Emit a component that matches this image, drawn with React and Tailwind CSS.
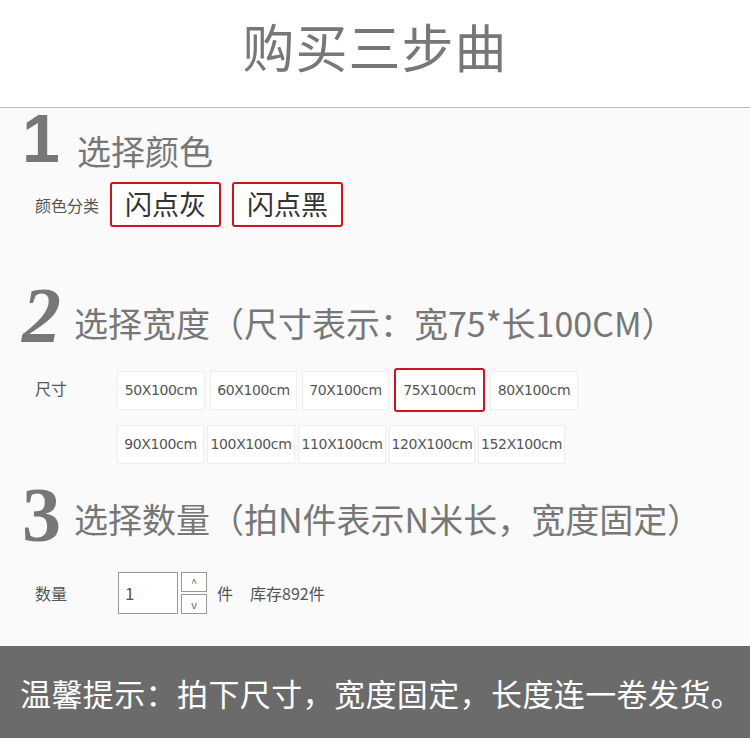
import React from "react";

const cjk = { fontFamily: '"Noto Sans CJK SC", "Noto Sans", sans-serif' };
const serif = { fontFamily: '"Liberation Serif", "DejaVu Serif", serif' };
const sans = { fontFamily: '"Liberation Sans", Arial, sans-serif' };

const sizesTop = [
  { label: "50X100cm", w: "w-[88px]" },
  { label: "60X100cm", w: "w-[87px]" },
  { label: "70X100cm", w: "w-[87px]" },
  { label: "75X100cm", w: "w-[91px]", active: true },
  { label: "80X100cm", w: "w-[88px]" },
];

const sizesBottom = [
  { label: "90X100cm", w: "w-[87px]" },
  { label: "100X100cm", w: "w-[88px]" },
  { label: "110X100cm", w: "w-[88px]" },
  { label: "120X100cm", w: "w-[86px]" },
  { label: "152X100cm", w: "w-[87px]" },
];

function StepHead({ num, numClass, numFont, children }) {
  return (
    <div className="flex items-end h-[62px] pl-[22px]">
      <span className={"text-[#777] leading-none w-[52px] " + numClass} style={numFont}>
        {num}
      </span>
      <span className="text-[34px] leading-none text-[#777] pb-[2px]" style={cjk}>
        {children}
      </span>
    </div>
  );
}

function SizeBox({ label, w, active }) {
  return (
    <div
      className={
        active
          ? w + " h-[44px] flex items-center justify-center border-2 border-[#d0141b] rounded-[3px] bg-white"
          : w + " h-[39px] flex items-center justify-center border border-[#eeeeee] bg-white"
      }
    >
      <span className="text-[14px] text-[#555] tracking-[-0.4px]" style={{ fontFamily: '"DejaVu Sans", sans-serif' }}>
        {label}
      </span>
    </div>
  );
}

export default function App() {
  return (
    <div className="w-[750px] h-[744px] bg-white overflow-hidden" style={cjk}>
      <div className="h-[107px] flex items-center justify-center pb-[16px]">
        <h1 className="text-[52px] leading-none text-[#777] tracking-[1px]">购买三步曲</h1>
      </div>
      <div className="h-px bg-[#b8b8b8]" />

      <div className="bg-[#fafafa] h-[538px]">
        <StepHead num="1" numClass="text-[68px] font-bold mb-[-2px]" numFont={sans}>
          <span className="pl-[3px]">选择颜色</span>
        </StepHead>

        <div className="flex items-center mt-[12px] h-[45px]">
          <span className="pl-[35px] w-[110px] text-[16px] text-[#555]">颜色分类</span>
          <div className="flex gap-[11px]">
            {["闪点灰", "闪点黑"].map((c) => (
              <div
                key={c}
                className="w-[111px] h-[45px] flex items-center justify-center border-2 border-[#d0141b] rounded-[3px] bg-white text-[27px] text-[#333]"
              >
                {c}
              </div>
            ))}
          </div>
        </div>

        <div className="mt-[53px]">
          <StepHead num="2" numClass="text-[78px] font-bold italic mb-[-12px]" numFont={serif}>
            选择宽度（尺寸表示：宽75*长100CM）
          </StepHead>
        </div>

        <div className="mt-[26px] flex">
          <span className="pl-[35px] w-[117px] text-[16px] text-[#555] pt-[8px]">尺寸</span>
          <div className="flex flex-col gap-[10px]">
            <div className="flex items-center gap-[5px] h-[44px]">
              {sizesTop.map((s) => (
                <SizeBox key={s.label} {...s} />
              ))}
            </div>
            <div className="flex items-center gap-[3px] h-[44px]">
              {sizesBottom.map((s) => (
                <SizeBox key={s.label} {...s} />
              ))}
            </div>
          </div>
        </div>

        <div className="mt-[10px]">
          <StepHead num="3" numClass="text-[78px] font-bold mb-[-16px]" numFont={serif}>
            选择数量（拍N件表示N米长，宽度固定）
          </StepHead>
        </div>

        <div className="flex items-center mt-[34px] h-[42px]">
          <span className="pl-[35px] w-[118px] text-[16px] text-[#555]">数量</span>
          <div className="w-[60px] h-[42px] border border-[#999] bg-white flex items-center pl-[6px] text-[17px] text-[#555]">
            1
          </div>
          <div className="flex flex-col gap-[2px] ml-[3px]">
            <div className="w-[26px] h-[20px] border border-[#999] bg-white flex items-center justify-center text-[11px] text-[#666]">^</div>
            <div className="w-[26px] h-[20px] border border-[#999] bg-white flex items-center justify-center text-[11px] text-[#666]">v</div>
          </div>
          <span className="ml-[10px] text-[16px] text-[#555]">件</span>
          <span className="ml-[17px] text-[16px] text-[#555]">库存892件</span>
        </div>
      </div>

      <div className="h-[92px] bg-[#6b6b6b] flex items-center pl-[20px]">
        <span className="text-[31px] text-white leading-none tracking-[0.4px]">
          温馨提示：拍下尺寸，宽度固定，长度连一卷发货。
        </span>
      </div>
    </div>
  );
}
